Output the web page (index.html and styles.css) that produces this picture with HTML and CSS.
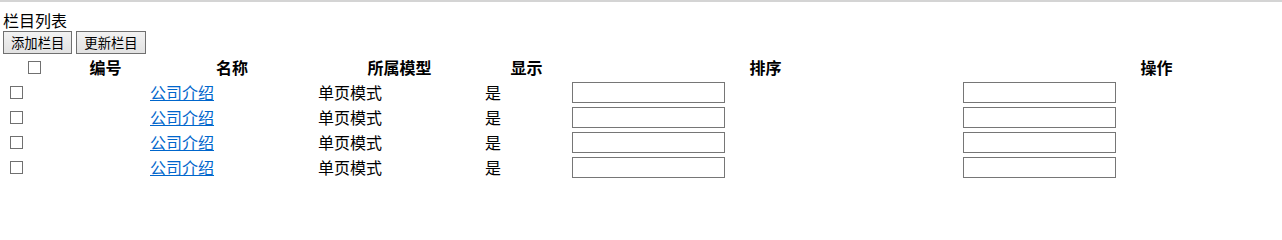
FILE: index.html
```html
<!DOCTYPE html>
<html lang="zh-CN">
<head>
<meta charset="utf-8">
<title>栏目列表</title>
<link rel="stylesheet" href="styles.css">
</head>
<body>
<div class="topline"></div>
<div class="page">
  <div class="title">栏目列表</div>
  <div class="toolbar">
    <button class="btn" type="button">添加栏目</button>
    <button class="btn" type="button">更新栏目</button>
  </div>
  <div class="list-wrap">
    <table class="list">
      <thead>
        <tr>
          <th class="c1"><input class="cb" type="checkbox"></th>
          <th class="c2">编号</th>
          <th class="c3">名称</th>
          <th class="c4">所属模型</th>
          <th class="c5">显示</th>
          <th class="c6">排序</th>
          <th class="c7">操作</th>
        </tr>
      </thead>
      <tbody>
        <tr>
          <td><input class="cb" type="checkbox"></td>
          <td></td>
          <td><a href="#">公司介绍</a></td>
          <td>单页模式</td>
          <td>是</td>
          <td><input class="txt" type="text"></td>
          <td><input class="txt" type="text"></td>
        </tr>
        <tr>
          <td><input class="cb" type="checkbox"></td>
          <td></td>
          <td><a href="#">公司介绍</a></td>
          <td>单页模式</td>
          <td>是</td>
          <td><input class="txt" type="text"></td>
          <td><input class="txt" type="text"></td>
        </tr>
        <tr>
          <td><input class="cb" type="checkbox"></td>
          <td></td>
          <td><a href="#">公司介绍</a></td>
          <td>单页模式</td>
          <td>是</td>
          <td><input class="txt" type="text"></td>
          <td><input class="txt" type="text"></td>
        </tr>
        <tr>
          <td><input class="cb" type="checkbox"></td>
          <td></td>
          <td><a href="#">公司介绍</a></td>
          <td>单页模式</td>
          <td>是</td>
          <td><input class="txt" type="text"></td>
          <td><input class="txt" type="text"></td>
        </tr>
      </tbody>
    </table>
  </div>
</div>
</body>
</html>
```

FILE: styles.css
```css
html, body {
  margin: 0;
  padding: 0;
  background: #ffffff;
}

body {
  font-family: "Noto Sans CJK SC", "Noto Sans", sans-serif;
  font-size: 16px;
  line-height: 21px;
  color: #000000;
}

.topline {
  height: 2px;
  background: #d4d4d4;
}

.page {
  padding: 8px 0 0 3px;
}

.title {
  height: 21px;
}

.toolbar {
  display: flex;
  gap: 4px;
}

.btn {
  font-family: "Noto Sans CJK SC", "Noto Sans", sans-serif;
  font-size: 13.333px;
  line-height: 17px;
  padding: 2px 7px;
  margin: 0;
  border: 1px solid #707070;
  border-radius: 0;
  background: linear-gradient(#f2f2f2, #e2e2e2);
  color: #000000;
}

.list-wrap {
  overflow: hidden;
}

.list {
  table-layout: fixed;
  width: 1350px;
  border-collapse: separate;
  border-spacing: 2px;
}

.list th,
.list td {
  padding: 1px;
  line-height: 21px;
  vertical-align: top;
}

.list th {
  font-weight: bold;
  text-align: center;
}

.list td {
  text-align: left;
}

.c1 { width: 55px; }
.c2 { width: 81px; }
.c3 { width: 164px; }
.c4 { width: 163px; }
.c5 { width: 83px; }
.c6 { width: 387px; }
.c7 { width: 387px; }

.cb {
  -webkit-appearance: none;
  appearance: none;
  box-sizing: border-box;
  width: 13px;
  height: 13px;
  margin: 4px 3px 3px 4px;
  border: 1px solid #707070;
  border-radius: 0;
  background: #ffffff;
  vertical-align: top;
}

.txt {
  box-sizing: border-box;
  width: 153px;
  height: 21px;
  margin: 0;
  padding: 1px 2px;
  border: 1px solid #767676;
  border-radius: 0;
  vertical-align: top;
  font-size: 13.333px;
}

.list a {
  color: #0066cc;
  text-decoration: underline;
}
```
